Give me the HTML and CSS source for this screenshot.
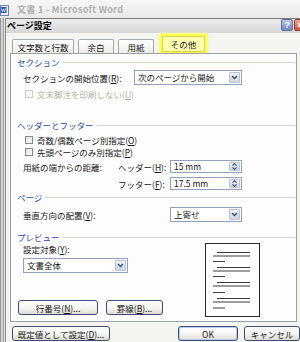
FILE: index.html
```html
<!DOCTYPE html>
<html lang="ja">
<head>
<meta charset="utf-8">
<title>ページ設定</title>
<link rel="stylesheet" href="styles.css">
</head>
<body>
<div class="screen">
  <div class="word-title">
    <svg class="word-icon" viewBox="0 0 9 11" width="9" height="11"><rect x="0.5" y="0.5" width="8" height="10" fill="#f4f6fb" stroke="#6d83b5"/><rect x="0.5" y="2" width="6" height="6" fill="#2d5db8"/><path d="M1.5 3.5 L2.5 6.5 L3.5 4.5 L4.5 6.5 L5.5 3.5" fill="none" stroke="#fff" stroke-width="0.8"/></svg>
    <span class="word-title-text">文書 1 - Microsoft Word</span>
  </div>
  <div class="main">
    <div class="word-frame"></div>
    <div class="dialog">
      <div class="dlg-title">
        <span class="dlg-title-text">ページ設定</span>
        <span class="tb-btns">
          <span class="tb-help">?</span>
          <span class="tb-close"><svg viewBox="0 0 10 10" width="10" height="10"><path d="M3 3 L7 7 M7 3 L3 7" stroke="#fff" stroke-width="1.4"/></svg></span>
        </span>
      </div>
      <div class="dlg-body">
        <div class="tabs">
          <span class="tab t1">文字数と行数</span>
          <span class="tab t2">余白</span>
          <span class="tab t3">用紙</span>
          <span class="tab sel">その他</span>
        </div>
        <div class="panel">
          <div class="grp g1"><span class="grp-t">セクション</span><span class="grp-line"></span></div>
          <div class="row r-start">
            <span class="lbl w-start">セクションの開始位置(<u>R</u>):</span>
            <div class="select w108"><span class="val">次のページから開始</span><span class="arrow"><svg viewBox="0 0 7 5" width="7" height="5"><path d="M1 1 L3.5 3.5 L6 1" fill="none" stroke="#3a4d6e" stroke-width="1.4"/></svg></span></div>
          </div>
          <div class="row cbrow dis r-endnote">
            <span class="cb"></span><span>文末脚注を印刷しない(<u>U</u>)</span>
          </div>

          <div class="grp g2"><span class="grp-t">ヘッダーとフッター</span><span class="grp-line"></span></div>
          <div class="row cbrow r-cb1">
            <span class="cb"></span><span>奇数/偶数ページ別指定(<u>O</u>)</span>
          </div>
          <div class="row cbrow r-cb2">
            <span class="cb"></span><span>先頭ページのみ別指定(<u>P</u>)</span>
          </div>
          <div class="row r-dist">
            <span class="lbl w-dist">用紙の端からの距離:</span>
            <span class="lbl w-hf">ヘッダー(<u>H</u>):</span>
            <div class="spin"><span class="sval">15 mm</span><span class="spin-btns"><svg viewBox="0 0 11 11" width="11" height="11"><path d="M3 4.5 L5.5 2 L8 4.5 M3 6.5 L5.5 9 L8 6.5" fill="none" stroke="#3a4d6e" stroke-width="1.3"/></svg></span></div>
          </div>
          <div class="row r-foot">
            <span class="lbl w-dist"></span>
            <span class="lbl w-hf">フッター(<u>F</u>):</span>
            <div class="spin"><span class="sval">17.5 mm</span><span class="spin-btns"><svg viewBox="0 0 11 11" width="11" height="11"><path d="M3 4.5 L5.5 2 L8 4.5 M3 6.5 L5.5 9 L8 6.5" fill="none" stroke="#3a4d6e" stroke-width="1.3"/></svg></span></div>
          </div>

          <div class="grp g3"><span class="grp-t">ページ</span><span class="grp-line"></span></div>
          <div class="row r-valign">
            <span class="lbl w-valign">垂直方向の配置(<u>V</u>):</span>
            <div class="select w72"><span class="val">上寄せ</span><span class="arrow"><svg viewBox="0 0 7 5" width="7" height="5"><path d="M1 1 L3.5 3.5 L6 1" fill="none" stroke="#3a4d6e" stroke-width="1.4"/></svg></span></div>
          </div>

          <div class="grp g4"><span class="grp-t">プレビュー</span><span class="grp-line"></span></div>
          <div class="preview">
            <div class="pv-left">
              <div class="pv-label">設定対象(<u>Y</u>):</div>
              <div class="select w105 pv-select"><span class="val">文書全体</span><span class="arrow"><svg viewBox="0 0 7 5" width="7" height="5"><path d="M1 1 L3.5 3.5 L6 1" fill="none" stroke="#3a4d6e" stroke-width="1.4"/></svg></span></div>
              <div class="pv-btns">
                <span class="btn b-line">行番号(<u>N</u>)...</span>
                <span class="btn b-border">罫線(<u>B</u>)...</span>
              </div>
            </div>
            <div class="page">
              <svg viewBox="0 0 55 74" width="55" height="74">
                <g stroke="#3c3c3c" stroke-width="1.2">
                  <path d="M12 9.5 H45 M8 13 H45 M8 18.5 H20"/>
                  <path d="M12 24.5 H45 M8 28 H45 M8 33.5 H20"/>
                  <path d="M12 39.5 H45 M8 43 H45 M8 49.5 H20"/>
                  <path d="M12 55.5 H45 M8 59 H45 M8 65 H20"/>
                </g>
              </svg>
            </div>
          </div>
        </div>
        <div class="footer">
          <span class="btn b-default">既定値として設定(<u>D</u>)...</span>
          <span class="spacer"></span>
          <span class="btn b-ok">OK</span>
          <span class="btn b-cancel">キャンセル</span>
        </div>
      </div>
    </div>
  </div>
</div>
</body>
</html>
```
FILE: styles.css
```css
* { box-sizing: border-box; margin: 0; padding: 0; }
html, body { width: 300px; height: 342px; overflow: hidden; }
body {
  font-family: "Noto Sans CJK JP", "Noto Sans", sans-serif;
  font-size: 8.5px;
  line-height: 10px;
  color: #151515;
  background: #ececec;
}
u { text-decoration: underline; }

.screen { width: 300px; height: 342px; overflow: hidden; display: flex; flex-direction: column; }

.word-title {
  height: 18px; flex: none; display: flex; align-items: center;
  background: linear-gradient(#f7f7f7, #e8e8e8);
  padding-top: 2px;
}
.word-icon { display: block; margin-right: 8px; }
.word-title-text { font-weight: bold; font-size: 9px; color: #b0b0b0; letter-spacing: 0.3px; }

.main { flex: 1; display: flex; min-height: 0; }
.word-frame {
  width: 5px; flex: none;
  background: linear-gradient(to right, #9a9a9a 0, #9a9a9a 1px, #cfcfcf 1px, #cfcfcf 3px, #a8a8a8 3px, #a8a8a8 4px, #dedede 4px);
}
.dialog {
  width: 295px; flex: none; display: flex; flex-direction: column;
  background: #f4f4f1; border-left: 1px solid #8a8a8a;
}
.dlg-title {
  height: 15px; flex: none; display: flex; align-items: center;
  border-top: 1px solid #7a7a7a;
  background: linear-gradient(#ececec, #d6d6d6);
  padding-left: 1px;
}
.dlg-title-text { font-weight: bold; font-size: 9px; color: #000; }
.tb-btns { margin-left: auto; display: flex; gap: 1px; align-self: flex-start; margin-right: -6px; }
.tb-help, .tb-close {
  width: 12px; height: 12px; border-radius: 2px; display: flex; align-items: center; justify-content: center;
  font-family: "Liberation Sans", sans-serif; font-weight: bold; color: #fff; font-size: 9px; line-height: 10px;
}
.tb-help { background: linear-gradient(#b9c7e8, #6f86c0); border: 1px solid #5e72a6; }
.tb-close { background: linear-gradient(#e9a99b, #c4553e); border: 1px solid #9a3f2e; }
.tb-close svg { display: block; }

.dlg-body { flex: 1; display: flex; flex-direction: column; padding: 0 3px 0 4px; }

.tabs { height: 20px; flex: none; display: flex; align-items: flex-end; padding-left: 2px; gap: 4px; }
.tab {
  height: 14px; display: flex; align-items: center; justify-content: center;
  border: 1px solid #a4a9ad; border-bottom: none; border-radius: 2px 2px 0 0;
  background: linear-gradient(#ffffff, #ecebe6);
}
.t1 { width: 62px; }
.t2 { width: 36px; }
.t3 { width: 36px; }
.tab.sel {
  width: 43px; height: 16px; margin-left: 4px; margin-bottom: 1px;
  background: #ffffb0; border: 1px solid #d8d850; border-radius: 1px;
  box-shadow: 0 0 0 2px #ffff4a, 0 0 2px 3px #fbfb8a;
}

.panel {
  height: 269px; flex: none;
  border: 1px solid #9aa1a6; background: #fdfdfd;
  padding: 0 1px 0 6px;
  display: flex; flex-direction: column;
}
.grp { height: 10px; display: flex; align-items: center; flex: none; }
.grp-t { color: #1e49b6; }
.grp-line { flex: 1; height: 1px; background: #d6d4cc; margin-left: 3px; margin-top: 1px; }
.g1 { margin-top: 3px; }
.g2 { margin-top: 21px; }
.g3 { margin-top: 2px; }
.g4 { margin-top: 10px; }

.row { display: flex; align-items: center; flex: none; padding-left: 6px; }
.r-start { height: 15px; margin-top: 3px; }
.r-endnote { height: 10px; margin-top: 4px; }
.r-cb1 { height: 10px; margin-top: 5px; }
.r-cb2 { height: 10px; margin-top: 2px; }
.r-dist { height: 13px; margin-top: 3px; }
.r-foot { height: 13px; margin-top: 4px; }
.r-valign { height: 15px; margin-top: 5px; }

.lbl { flex: none; white-space: nowrap; }
.w-start { width: 111px; }
.w-dist { width: 95px; }
.w-hf { width: 52px; }
.w-valign { width: 147px; }

.cbrow { padding-left: 8px; }
.cb {
  width: 8px; height: 8px; flex: none; margin-right: 4px;
  border: 1px solid #7e8c9a; background: linear-gradient(135deg, #e2e2dc, #fbfbf9);
}
.dis { color: #b4b1a6; }
.dis .cb { border-color: #cbcac4; background: #f7f7f5; }

.select {
  height: 15px; display: flex; border: 1px solid #8ea3bd; background: #fff; padding: 1px; flex: none;
}
.w108 { width: 108px; }
.w72 { width: 72px; }
.w105 { width: 105px; }
.select .val { flex: 1; padding-left: 2px; line-height: 11px; white-space: nowrap; }
.arrow {
  width: 11px; flex: none; display: flex; align-items: center; justify-content: center;
  background: linear-gradient(#eef1f7, #cdd5e3); border: 1px solid #b8c3d4; border-radius: 1px;
}
.spin {
  width: 72px; height: 13px; display: flex; align-items: center; border: 1px solid #8ea3bd; background: #fff; padding: 0 1px; flex: none;
}
.sval { flex: 1; padding-left: 2px; line-height: 11px; white-space: nowrap; }
.spin-btns {
  width: 11px; height: 9px; flex: none; display: flex; align-items: center; justify-content: center;
  background: linear-gradient(#eef1f7, #cdd5e3); border: 1px solid #b8c3d4; border-radius: 1px; overflow: hidden;
}
.spin-btns svg { display: block; width: 9px; height: 9px; }

.preview { display: flex; margin-top: 1px; flex: none; height: 74px; }
.pv-left { width: 188px; flex: none; display: flex; flex-direction: column; }
.pv-label { height: 10px; margin-top: 1px; padding-left: 6px; }
.pv-select { margin-top: 4px; margin-left: 6px; }
.pv-btns { display: flex; gap: 8px; margin-top: 27px; padding-left: 1px; }

.btn {
  height: 15px; display: flex; align-items: center; justify-content: center; flex: none;
  border: 1px solid #3a4f73; border-radius: 3px;
  background: linear-gradient(#ffffff, #f4f4f0 55%, #dddbd3);
  white-space: nowrap;
}
.b-line { width: 80px; }
.b-border { width: 57px; }
.page {
  width: 55px; height: 74px; flex: none; border: 1.5px solid #2a2a2a; background: #fff;
}
.page svg { display: block; margin: -1.5px; }

.footer { display: flex; padding-top: 4px; margin-right: -3px; }
.b-default { width: 98px; margin-left: 2px; }
.spacer { flex: 1; }
.b-ok { width: 60px; margin-right: 6px; box-shadow: inset 0 0 0 1px #b7cdf2; }
.b-cancel { width: 56px; }
```
